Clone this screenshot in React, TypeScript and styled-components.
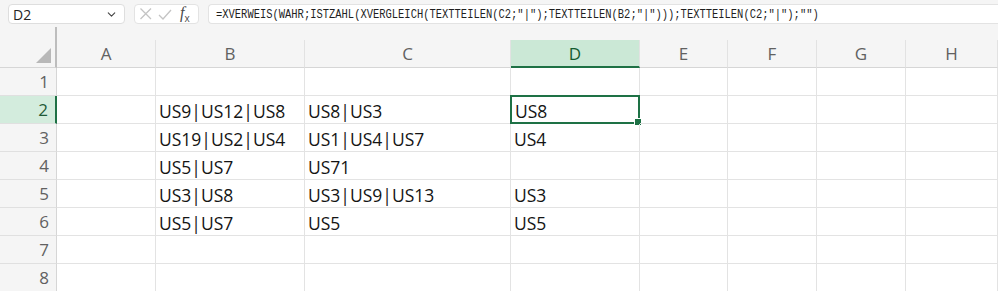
import React from "react";
import styled, { createGlobalStyle } from "styled-components";
import { ChevronDown } from "lucide-react";

const GlobalStyle = createGlobalStyle`
  html, body {
    margin: 0;
    padding: 0;
    background: #ffffff;
    overflow: hidden;
  }
  body {
    font-family: "Open Sans", "Noto Sans", sans-serif;
  }
`;

const ACCENT = "#1e7145";
const GRID = "#e3e3e3";
const HEAD_BG = "#f5f5f5";

const columns = [
  { name: "A", width: 99 },
  { name: "B", width: 149 },
  { name: "C", width: 206 },
  { name: "D", width: 129 },
  { name: "E", width: 88 },
  { name: "F", width: 89 },
  { name: "G", width: 89 },
  { name: "H", width: 92 },
];

const rows: string[][] = [
  ["", "", "", "", "", "", "", ""],
  ["", "US9|US12|US8", "US8|US3", "US8", "", "", "", ""],
  ["", "US19|US2|US4", "US1|US4|US7", "US4", "", "", "", ""],
  ["", "US5|US7", "US71", "", "", "", "", ""],
  ["", "US3|US8", "US3|US9|US13", "US3", "", "", "", ""],
  ["", "US5|US7", "US5", "US5", "", "", "", ""],
  ["", "", "", "", "", "", "", ""],
  ["", "", "", "", "", "", "", ""],
];

const formula =
  '=XVERWEIS(WAHR;ISTZAHL(XVERGLEICH(TEXTTEILEN(C2;"|");TEXTTEILEN(B2;"|")));TEXTTEILEN(C2;"|");"")';

const Page = styled.div`
  width: 998px;
  height: 291px;
  background: ${HEAD_BG};
  overflow: hidden;
`;

const Toolbar = styled.div`
  display: flex;
  align-items: center;
  gap: 9px;
  height: 24px;
  padding: 2px 0 1px 8px;
`;

const NameBox = styled.div`
  display: flex;
  align-items: center;
  justify-content: space-between;
  box-sizing: border-box;
  width: 117px;
  height: 20px;
  padding: 0 6px 0 4px;
  background: #ffffff;
  border: 1px solid #dedede;
  border-radius: 4px;
  font-size: 14px;
  color: #242424;
`;

const FxBox = styled.div`
  display: flex;
  align-items: center;
  gap: 6px;
  box-sizing: border-box;
  width: 65px;
  height: 20px;
  padding: 0 4px 0 4px;
  background: #ffffff;
  border: 1px solid #e3e3e3;
  border-radius: 4px;
`;

const FxLabel = styled.span`
  margin-left: 2px;
  font-family: "Liberation Serif", serif;
  font-style: italic;
  font-size: 16px;
  color: #4a4a4a;
  line-height: 1;
  sub {
    font-style: normal;
    font-family: "Open Sans", sans-serif;
    font-size: 10px;
  }
`;

const FormulaBox = styled.div`
  flex: 1;
  display: flex;
  align-items: center;
  box-sizing: border-box;
  height: 20px;
  padding-left: 7px;
  background: #ffffff;
  border: 1px solid #e3e3e3;
  border-right: none;
  border-radius: 4px 0 0 4px;
  overflow: hidden;
`;

const FormulaText = styled.span`
  font-family: "Liberation Mono", "DejaVu Sans Mono", monospace;
  font-size: 13.5px;
  color: #1f1f1f;
  white-space: nowrap;
  transform: scaleX(0.775);
  transform-origin: left center;
`;

const Sheet = styled.div`
  display: grid;
  grid-template-columns: 57px ${columns.map((c) => `${c.width}px`).join(" ")};
  grid-auto-rows: 28px;
  grid-template-rows: 41px;
  background: #ffffff;
`;

const Corner = styled.div`
  display: flex;
  align-items: flex-end;
  justify-content: flex-end;
  box-sizing: border-box;
  padding: 0 4px 4px 0;
  background: ${HEAD_BG};
  border-right: 2px solid #bdbdbd;
  border-bottom: 1px solid #d6d6d6;
`;

const ColHead = styled.div`
  display: flex;
  flex-direction: column;
  justify-content: flex-end;
  background: ${HEAD_BG};
`;

const ColLabel = styled.div<{ $active?: boolean }>`
  display: flex;
  align-items: center;
  justify-content: center;
  box-sizing: border-box;
  height: 28px;
  font-size: 17px;
  color: ${(p) => (p.$active ? "#145c31" : "#616161")};
  background: ${(p) => (p.$active ? "#cbe8d6" : HEAD_BG)};
  border-right: 1px solid #e2e2e2;
  border-bottom: ${(p) => (p.$active ? `2px solid ${ACCENT}` : "1px solid #d6d6d6")};
`;

const RowHead = styled.div<{ $active?: boolean }>`
  display: flex;
  align-items: center;
  justify-content: flex-end;
  box-sizing: border-box;
  padding-right: 7px;
  font-size: 17px;
  color: ${(p) => (p.$active ? "#1f5a37" : "#616161")};
  background: ${(p) => (p.$active ? "#d3ecdd" : HEAD_BG)};
  border-bottom: 1px solid #e0e0e0;
  border-right: ${(p) => (p.$active ? `2px solid ${ACCENT}` : "1px solid #d6d6d6")};
`;

const Cell = styled.div<{ $selected?: boolean }>`
  position: relative;
  display: flex;
  align-items: center;
  box-sizing: border-box;
  padding: 2px 0 0 3px;
  font-size: 17.5px;
  color: #141414;
  white-space: nowrap;
  border-right: 1px solid ${GRID};
  border-bottom: 1px solid ${GRID};
  ${(p) =>
    p.$selected &&
    `
    border: 2px solid ${ACCENT};
    margin: -1px 0 0 -1px;
    padding-left: 3px;
  `}
`;

const FillHandle = styled.span`
  position: absolute;
  right: -4px;
  bottom: -4px;
  width: 6px;
  height: 6px;
  background: ${ACCENT};
  border: 1px solid #ffffff;
`;

const App = (): JSX.Element => {
  return (
    <Page>
      <GlobalStyle />
      <Toolbar>
        <NameBox>
          D2
          <ChevronDown size={13} color="#444" strokeWidth={2} />
        </NameBox>
        <FxBox>
          <svg width="13" height="12" viewBox="0 0 13 12">
            <path d="M1.5 0.5 L12 11 M12 0.5 L1.5 11" stroke="#c4c4c4" strokeWidth="1.3" fill="none" />
          </svg>
          <svg width="14" height="11" viewBox="0 0 14 11">
            <path d="M1 6 L5 10 L13 1" stroke="#c4c4c4" strokeWidth="1.3" fill="none" />
          </svg>
          <FxLabel>
            f<sub>x</sub>
          </FxLabel>
        </FxBox>
        <FormulaBox>
          <FormulaText>{formula}</FormulaText>
        </FormulaBox>
      </Toolbar>

      <Sheet>
        <Corner>
          <svg width="15" height="15" viewBox="0 0 15 15">
            <polygon points="15,0 15,15 0,15" fill="#b8b8b8" />
          </svg>
        </Corner>
        {columns.map((c) => (
          <ColHead key={c.name}>
            <ColLabel $active={c.name === "D"}>{c.name}</ColLabel>
          </ColHead>
        ))}

        {rows.map((row, r) => (
          <React.Fragment key={r}>
            <RowHead $active={r === 1}>{r + 1}</RowHead>
            {row.map((value, c) => {
              const selected = r === 1 && c === 3;
              return (
                <Cell key={c} $selected={selected}>
                  {value}
                  {selected && <FillHandle />}
                </Cell>
              );
            })}
          </React.Fragment>
        ))}
      </Sheet>
    </Page>
  );
};

export default App;
